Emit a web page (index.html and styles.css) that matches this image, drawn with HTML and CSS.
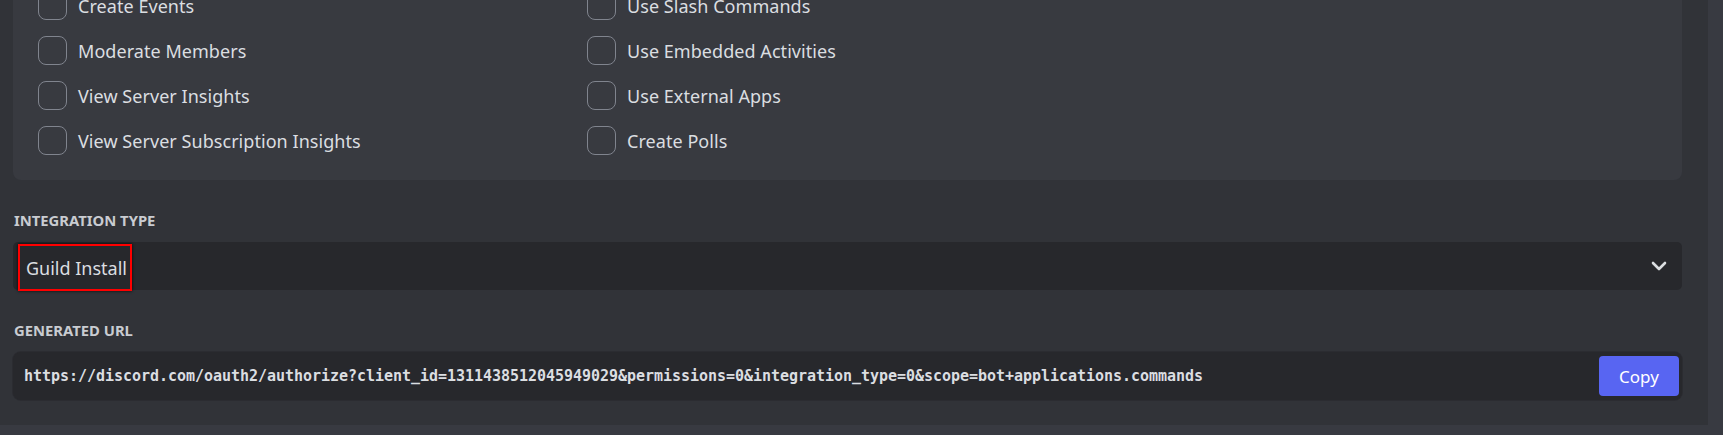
FILE: index.html
```html
<!DOCTYPE html>
<html>
<head>
<meta charset="utf-8">
<link rel="stylesheet" href="styles.css">
</head>
<body>
<div class="card">
  <div class="panel">
    <div class="col">
      <label class="perm"><span class="box"></span><span class="name">Create Events</span></label>
      <label class="perm"><span class="box"></span><span class="name">Moderate Members</span></label>
      <label class="perm"><span class="box"></span><span class="name">View Server Insights</span></label>
      <label class="perm"><span class="box"></span><span class="name">View Server Subscription Insights</span></label>
    </div>
    <div class="col">
      <label class="perm"><span class="box"></span><span class="name">Use Slash Commands</span></label>
      <label class="perm"><span class="box"></span><span class="name">Use Embedded Activities</span></label>
      <label class="perm"><span class="box"></span><span class="name">Use External Apps</span></label>
      <label class="perm"><span class="box"></span><span class="name">Create Polls</span></label>
    </div>
    <div class="col"></div>
  </div>

  <div class="eyebrow">Integration Type</div>
  <div class="select">
    <span class="highlight">Guild Install</span>
    <svg class="chevron" width="16" height="10" viewBox="0 0 16 10"><path d="M2 2l6 6 6-6" fill="none" stroke="#dbdee1" stroke-width="2.6" stroke-linecap="round" stroke-linejoin="round"/></svg>
  </div>

  <div class="eyebrow">Generated URL</div>
  <div class="urlbox">
    <span class="url">https://discord.com/oauth2/authorize?client_id=1311438512045949029&amp;permissions=0&amp;integration_type=0&amp;scope=bot+applications.commands</span>
    <button class="copy">Copy</button>
  </div>
</div>
</body>
</html>
```
FILE: styles.css
```css
html, body {
  margin: 0;
  padding: 0;
}
body {
  background: #383a41;
  font-family: "Noto Sans", "Open Sans", sans-serif;
  color: #dbdee1;
  overflow: hidden;
}
.card {
  width: 1708px;
  height: 425px;
  box-sizing: border-box;
  background: #313338;
  padding: 0 26px 0 13px;
  overflow: hidden;
}
.panel {
  margin-top: -17px;
  padding: 0 0 17px 25px;
  background: #383a40;
  border-radius: 0 0 8px 8px;
  display: grid;
  grid-template-columns: 549px 549px 1fr;
}
.col {
  display: flex;
  flex-direction: column;
}
.perm {
  height: 45px;
  display: flex;
  align-items: center;
  gap: 11px;
}
.box {
  width: 29px;
  height: 29px;
  box-sizing: border-box;
  border: 1px solid #80848e;
  border-radius: 8px;
  flex: none;
}
.name {
  font-size: 18px;
  line-height: 22px;
  color: #dbdee1;
  letter-spacing: 0.05px;
}
.eyebrow {
  margin-top: 31px;
  font-size: 14.8px;
  line-height: 18px;
  font-weight: 700;
  text-transform: uppercase;
  color: #c9ccd1;
  padding-left: 1px;
}
.select {
  margin-top: 13px;
  height: 48px;
  background: #27282c;
  border-radius: 5px;
  display: flex;
  align-items: flex-start;
  justify-content: space-between;
  padding: 0 15px 0 6px;
}
.highlight {
  margin-top: 2px;
  height: 47px;
  box-sizing: border-box;
  border: 2px solid #ff0000;
  box-shadow: 0 0 3px rgba(0, 0, 0, 0.8);
  padding: 0 3px 0 6px;
  margin-left: -1px;
  display: flex;
  align-items: center;
  font-size: 18px;
  color: #dbdee1;
}
.chevron {
  align-self: center;
}
.urlbox {
  margin-top: 13px;
  height: 48px;
  box-sizing: border-box;
  background: #27282c;
  border-radius: 8px;
  box-shadow: 0 0 0 1px #2b2c31;
  display: flex;
  align-items: center;
  justify-content: space-between;
  padding: 0 3px 0 11px;
}
.url {
  font-family: "DejaVu Sans Mono", "Liberation Mono", monospace;
  font-weight: 700;
  font-size: 15px;
  letter-spacing: -0.03px;
  color: #dbdee1;
  white-space: nowrap;
}
.copy {
  width: 80px;
  height: 40px;
  border: none;
  border-radius: 4px;
  background: #5865f2;
  color: #ffffff;
  font-family: "Noto Sans", "Open Sans", sans-serif;
  font-size: 17px;
  padding: 0;
}
```
